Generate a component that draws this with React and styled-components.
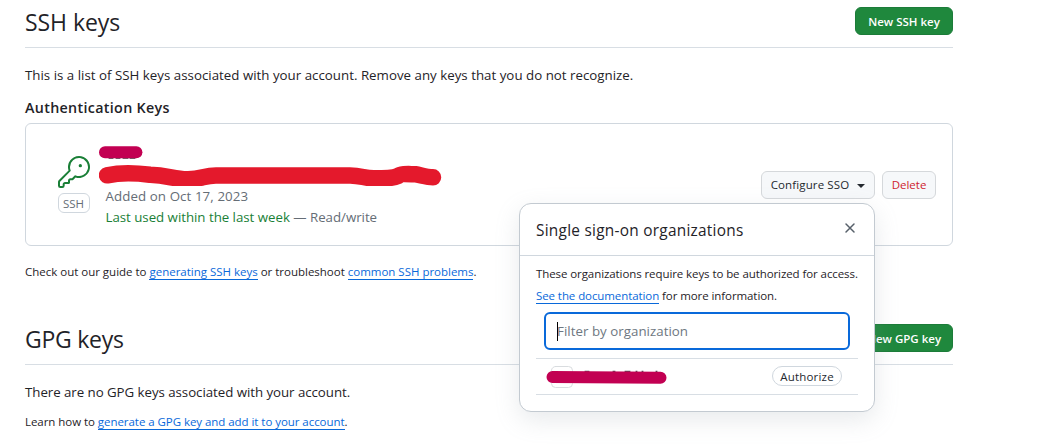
import React from "react";
import styled, { createGlobalStyle, css } from "styled-components";

const Global = createGlobalStyle`
  * { box-sizing: border-box; }
  html, body { margin: 0; background: #fff; overflow: hidden; }
  body { font-family: "Open Sans", "Noto Sans", sans-serif; font-size: 13.3px; color: #1f2328; }
  h2, h3, p { margin: 0; }
`;

const Page = styled.main`
  width: 953px;
  height: 447px;
  padding-left: 25px;
`;

const SectionHeader = styled.header`
  display: flex;
  justify-content: space-between;
  align-items: flex-start;
  height: 48px;
  padding-top: 7px;
  border-bottom: 1px solid #d8dee4;
`;

const Title = styled.h2`
  font-size: 23px;
  font-weight: 400;
  line-height: 31px;
  letter-spacing: ${(p) => p.$track || 0}px;
`;

const buttonBase = css`
  display: inline-flex;
  align-items: center;
  justify-content: center;
  height: 28px;
  border-radius: 6px;
  font-family: inherit;
  font-size: 11.5px;
  padding: 0;
  white-space: nowrap;
  flex: none;
`;

const PrimaryButton = styled.button`
  ${buttonBase}
  width: 98px;
  color: #fff;
  font-weight: 600;
  background: #1f883d;
  border: 1px solid #1c7c39;
`;

const Button = styled.button`
  ${buttonBase}
  width: ${(p) => p.$width}px;
  gap: 8px;
  padding-bottom: 1px;
  font-weight: 500;
  color: ${(p) => (p.$danger ? "#cf222e" : "#24292f")};
  background: #f6f8fa;
  border: 1px solid #d5d8db;
  letter-spacing: ${(p) => p.$track || 0}px;
`;

const Caret = styled.span`
  border: 4px solid transparent;
  border-top-color: currentColor;
  border-bottom: 0;
  margin-top: 3px;
`;

const Text = styled.p`
  line-height: 21px;
  white-space: nowrap;
  margin-top: ${(p) => p.$top || 0}px;
  letter-spacing: ${(p) => p.$track || 0}px;
`;

const SmallText = styled(Text)`
  font-size: 11.5px;
  line-height: 18px;
`;

const Link = styled.a`
  color: #0969da;
  border-bottom: 1px solid #0969da;
`;

const Subtitle = styled.h3`
  font-size: 14.3px;
  font-weight: 600;
  line-height: 21px;
  margin-top: 11px;
  letter-spacing: 0.32px;
`;

const Card = styled.section`
  display: flex;
  height: 123px;
  margin-top: 5px;
  margin-bottom: 17px;
  padding: 0 16px 0 32px;
  border: 1px solid #d0d7de;
  border-radius: 6px;
`;

const KeyBadge = styled.div`
  width: 33px;
  padding-top: 32px;
  svg { display: block; }
`;

const Label = styled.span`
  display: block;
  width: 32px;
  margin-top: 5px;
  height: 20px;
  padding-right: 1px;
  border: 1px solid #d0d7de;
  border-radius: 6px;
  color: #656d76;
  font-size: 11.5px;
  line-height: 19px;
  text-align: center;
`;

const KeyInfo = styled.div`
  flex: 1;
  padding: 22px 0 0 8px;
  svg { display: block; }
`;

const Meta = styled.div`
  padding-left: 6.5px;
  color: #656d76;
  line-height: 21px;
  letter-spacing: ${(p) => p.$track || 0}px;
`;

const Recent = styled.span`
  color: #1a7f37;
`;

const Actions = styled.div`
  display: flex;
  gap: 7px;
  padding-top: 47px;
`;

const MenuAnchor = styled.div`
  position: relative;
  height: 28px;
`;

const Popover = styled.div`
  position: absolute;
  top: 32px;
  right: 0;
  width: 356px;
  height: 209px;
  background: #fff;
  border: 1px solid #c3cad1;
  border-radius: 12px;
  box-shadow: 0 8px 24px rgba(140, 149, 159, 0.2);
`;

const PopoverHeader = styled.div`
  display: flex;
  justify-content: space-between;
  height: 52px;
  padding: 0 18px 0 16px;
  border-bottom: 1px solid #d0d7de;
`;

const PopoverTitle = styled.span`
  font-size: 15.4px;
  font-weight: 500;
  line-height: 53px;
  letter-spacing: 0.26px;
`;

const CloseIcon = styled.svg`
  margin-top: 18px;
`;

const PopoverBody = styled.div`
  padding: 7px 16px 0;
`;

const PopoverText = styled(SmallText)`
  line-height: 22px;
  letter-spacing: -0.085px;
`;

const Filter = styled.div`
  display: flex;
  align-items: center;
  width: 306px;
  height: 38px;
  margin: 5px 0 8px 8px;
  padding-left: 11px;
  border: 2px solid #0969da;
  border-radius: 6px;
  color: #6e7781;
  letter-spacing: 0.03px;
`;

const TextCursor = styled.span`
  width: 1px;
  height: 19px;
  margin-right: -1px;
  background: #000;
`;

const OrgRow = styled.div`
  display: flex;
  justify-content: space-between;
  height: 37px;
  padding: 7px 16px 0 9px;
  border-top: 1px solid #d8dee4;
  border-bottom: 1px solid #d8dee4;
  svg { display: block; }
`;

const Pill = styled.button`
  width: 70px;
  height: 20px;
  padding: 1px 0 0;
  border: 1px solid #d0d7de;
  border-radius: 10px;
  background: #fff;
  color: #24292f;
  font: 500 11.5px/18px "Open Sans", sans-serif;
  letter-spacing: 0.2px;
`;

const GpgSection = styled.section`
  margin-top: 36px;
`;

const KeyIcon = () => (
  <svg width="32" height="32" viewBox="0 0 24 24" fill="#1a7f37">
    <path d="M16.75 8.5a1.25 1.25 0 1 0 0-2.5 1.25 1.25 0 0 0 0 2.5Z" />
    <path d="M15.75 0a8.25 8.25 0 1 1-2.541 16.101l-1.636 1.636a1.744 1.744 0 0 1-1.237.513H9.25a.25.25 0 0 0-.25.25v1.448a.876.876 0 0 1-.256.619l-.214.213a.75.75 0 0 1-.545.22H5.25a.25.25 0 0 0-.25.25v1A1.75 1.75 0 0 1 3.25 24h-1.5A1.75 1.75 0 0 1 0 22.25v-2.836c0-.464.185-.908.513-1.236l7.386-7.388A8.249 8.249 0 0 1 15.75 0ZM9 8.25a6.733 6.733 0 0 0 .463 2.462.75.75 0 0 1-.168.804l-7.722 7.721a.25.25 0 0 0-.073.177v2.836c0 .138.112.25.25.25h1.5a.25.25 0 0 0 .25-.25v-1c0-.966.784-1.75 1.75-1.75H7.5v-1c0-.966.784-1.75 1.75-1.75h1.086a.25.25 0 0 0 .177-.073l1.971-1.972a.75.75 0 0 1 .804-.168A6.75 6.75 0 1 0 9 8.25Z" />
  </svg>
);

/* Marker strokes hiding the key's name and fingerprint */
const KeyRedaction = () => (
  <svg width="344" height="40" viewBox="99 146 344 40" fill="none" strokeLinecap="round" strokeLinejoin="round">
    <path d="M109 158.2h4M116 158.2h4M123 158.2h5M130 158.2h5" stroke="#1f2328" strokeWidth="1" />
    <path d="M105 152.2H136.400" stroke="#c20052" strokeWidth="12" />
    <path d="M107 175.300C118 173 136 173 150 174.800C168 175 174 179.500 188 179.300C202 179 204 175.500 216 175.500H350C362 175.700 364 178.300 374 178.300C387 178.300 393 178.300 398 176C401 173.500 409 174.200 415 174.200C422 175.500 427 177.300 433 177.300" stroke="#e4192c" strokeWidth="16.500" />
  </svg>
);

const OrgRedaction = () => (
  <svg width="124" height="24" viewBox="545 366 124 24" fill="none" strokeLinecap="round">
    <rect x="551.5" y="366.500" width="21" height="21" rx="4" stroke="#d9dcdf" />
    <path d="M585 371.300h4M613 371.300h2M625 371.300h5M636 371.300h1M642 371.300h1M656 371.300h1" stroke="#1f2328" />
    <path d="M552.500 377L660.500 377.700" stroke="#c20052" strokeWidth="12" />
  </svg>
);

export default function App() {
  return (
    <>
      <Global />
      <Page>
        <SectionHeader>
          <Title $track={-0.05}>SSH keys</Title>
          <PrimaryButton>New SSH key</PrimaryButton>
        </SectionHeader>
        <Text $top={17} $track={0.01}>This is a list of SSH keys associated with your account. Remove any keys that you do not recognize.</Text>
        <Subtitle>Authentication Keys</Subtitle>
        <Card>
          <KeyBadge>
            <KeyIcon />
            <Label>SSH</Label>
          </KeyBadge>
          <KeyInfo>
            <KeyRedaction />
            <Meta $track={0.09}>Added on Oct 17, 2023</Meta>
            <Meta $track={-0.03}><Recent>Last used within the last week</Recent> — Read/write</Meta>
          </KeyInfo>
          <Actions>
            <MenuAnchor>
              <Button $width={114} $track={0.12}>Configure SSO <Caret /></Button>
              <Popover>
                <PopoverHeader>
                  <PopoverTitle>Single sign-on organizations</PopoverTitle>
                  <CloseIcon width="12" height="12" viewBox="0 0 12 12" fill="none" stroke="#57606a" strokeWidth="1.5" strokeLinecap="round">
                    <path d="M2 2l8 8M10 2l-8 8" />
                  </CloseIcon>
                </PopoverHeader>
                <PopoverBody>
                  <PopoverText>These organizations require keys to be authorized for access.</PopoverText>
                  <PopoverText><Link>See the documentation</Link> for more information.</PopoverText>
                  <Filter><TextCursor />Filter by organization</Filter>
                  <OrgRow>
                    <OrgRedaction />
                    <Pill>Authorize</Pill>
                  </OrgRow>
                </PopoverBody>
              </Popover>
            </MenuAnchor>
            <Button $width={54} $danger>Delete</Button>
          </Actions>
        </Card>
        <SmallText $track={-0.01}>
          Check out our guide to <Link>generating SSH keys</Link> or troubleshoot <Link>common SSH problems</Link>.
        </SmallText>
        <GpgSection>
          <SectionHeader>
            <Title $track={-0.25}>GPG keys</Title>
            <PrimaryButton>New GPG key</PrimaryButton>
          </SectionHeader>
          <Text $top={17} $track={-0.05}>There are no GPG keys associated with your account.</Text>
          <SmallText $top={10} $track={-0.05}>
            Learn how to <Link>generate a GPG key and add it to your account</Link>.
          </SmallText>
        </GpgSection>
      </Page>
    </>
  );
}
